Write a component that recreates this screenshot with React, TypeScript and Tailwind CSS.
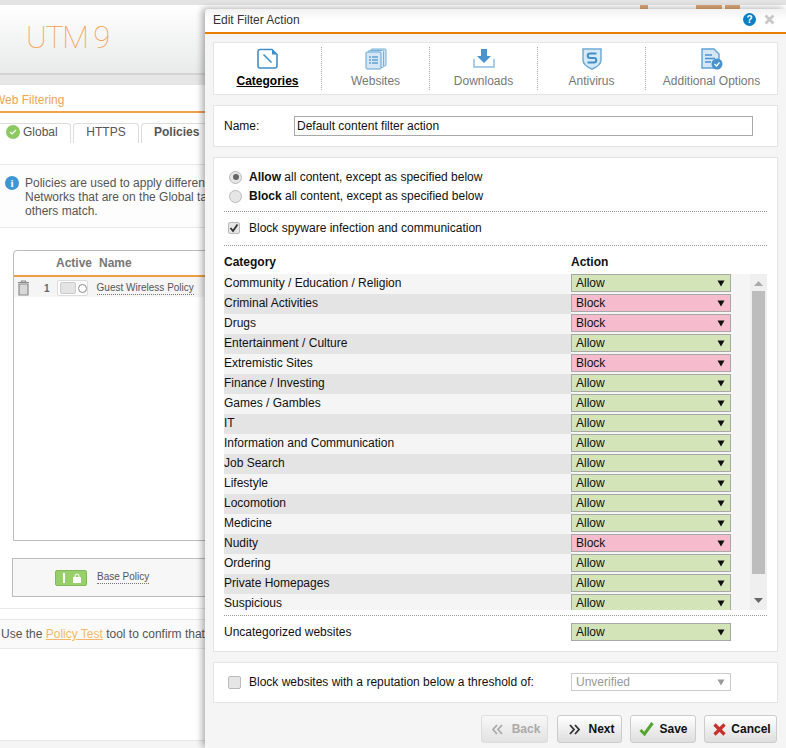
import React from 'react';

const rows: [string, 'Allow' | 'Block'][] = [
  ['Community / Education / Religion', 'Allow'],
  ['Criminal Activities', 'Block'],
  ['Drugs', 'Block'],
  ['Entertainment / Culture', 'Allow'],
  ['Extremistic Sites', 'Block'],
  ['Finance / Investing', 'Allow'],
  ['Games / Gambles', 'Allow'],
  ['IT', 'Allow'],
  ['Information and Communication', 'Allow'],
  ['Job Search', 'Allow'],
  ['Lifestyle', 'Allow'],
  ['Locomotion', 'Allow'],
  ['Medicine', 'Allow'],
  ['Nudity', 'Block'],
  ['Ordering', 'Allow'],
  ['Private Homepages', 'Allow'],
  ['Suspicious', 'Allow'],
];

const Arrow = ({ color = '#111' }: { color?: string }) => (
  <svg width="8" height="7" viewBox="0 0 8 7" className="shrink-0">
    <path d="M0.5 0.5h7L4 6.5z" fill={color} />
  </svg>
);

const ActionSelect = ({ value }: { value: 'Allow' | 'Block' }) => (
  <div
    className={`w-[160px] h-[18px] border border-[#a8a8a8] flex items-center justify-between pl-[4px] pr-[5px] text-[12px] text-[#111] ${
      value === 'Allow' ? 'bg-[#d3e4b9]' : 'bg-[#f6bccd]'
    }`}
  >
    {value}
    <Arrow />
  </div>
);

const Tab = ({ label, active, icon, className }: { label: string; active?: boolean; icon: React.ReactNode; className: string }) => (
  <div className={`flex flex-col items-center my-[4px] ${className}`}>
    <div className="h-[24px] flex items-center justify-center">{icon}</div>
    <span className={`mt-[3px] text-[12px] leading-[14px] ${active ? 'font-bold text-black underline' : 'text-[#777]'}`}>{label}</span>
  </div>
);

const CategoriesIcon = () => (
  <svg width="22" height="22" viewBox="0 0 22 22" fill="none">
    <path d="M3 1.5h12l5 5V18a2 2 0 0 1-2 2H3a2 2 0 0 1-2-2V3.500a2 2 0 0 1 2-2z" stroke="#3f8fc9" strokeWidth="1.6" />
    <path d="M15 1v5.500h5.500z" fill="#3f8fc9" />
    <path d="M6.500 6.500l8 8" stroke="#3f8fc9" strokeWidth="1.6" />
  </svg>
);

const WebsitesIcon = () => (
  <svg width="22" height="22" viewBox="0 0 22 22" fill="none">
    <rect x="6" y="1" width="15" height="17" rx="1" fill="#cfe3f3" stroke="#74aedb" />
    <rect x="3.500" y="2.500" width="15" height="17" rx="1" fill="#e2eff9" stroke="#74aedb" />
    <rect x="1" y="4" width="15" height="17" rx="1" fill="#d5e7f6" stroke="#5ea2d4" />
    <path d="M4 9h2M7 9h6M4 12h2M7 12h6M4 15h2M7 15h6" stroke="#5ea2d4" strokeWidth="1.300" />
  </svg>
);

const DownloadsIcon = () => (
  <svg width="22" height="20" viewBox="0 0 22 20" fill="none">
    <path d="M8 0h6v7h4l-7 7-7-7h4z" fill="#4a94cd" />
    <path d="M1 10v8h20v-8" stroke="#8dbde0" strokeWidth="1.500" />
  </svg>
);

const AntivirusIcon = () => (
  <svg width="20" height="22" viewBox="0 0 20 22" fill="none">
    <path d="M1 1h18v11c0 4-4 7-9 9-5-2-9-5-9-9z" fill="#d8e9f6" stroke="#6fabd9" strokeWidth="1.500" />
    <path d="M14.500 5.500H8a1.800 1.800 0 0 0 0 4.500h4a2 2 0 0 1 0 4.500H5.500" stroke="#3f8fc9" strokeWidth="2" />
  </svg>
);

const OptionsIcon = () => (
  <svg width="22" height="22" viewBox="0 0 22 22" fill="none">
    <path d="M1 1h12l5 5v14H1z" fill="#d5e7f6" stroke="#5ea2d4" strokeWidth="1.400" />
    <path d="M4 7h7M4 10.500h10M4 14h6" stroke="#4a94cd" strokeWidth="1.500" />
    <circle cx="16" cy="16" r="5.500" fill="#4a94cd" />
    <path d="M13.500 16l2 2 3-3.500" stroke="#fff" strokeWidth="1.200" />
  </svg>
);

const Chevrons = ({ color, flip }: { color: string; flip?: boolean }) => (
  <svg width="11" height="11" viewBox="0 0 11 11" fill="none" className={flip ? 'rotate-180' : ''}>
    <path d="M1 1l4 4.500-4 4.500M6 1l4 4.500-4 4.500" stroke={color} strokeWidth="1.800" />
  </svg>
);

const BackgroundPage = () => (
  <div className="w-[786px] h-[748px] flex flex-col bg-white text-[12px] text-[#555]">
    <div className="h-[5px] bg-[#e3e3e3] shrink-0" />
    <div className="relative h-[70px] shrink-0 bg-gradient-to-b from-white to-[#e9eaea] border-b-2 border-[#d4d4d4] pl-[26px] pt-[15px]">
      <span className="text-[31px] leading-[36px] font-thin tracking-[-1.5px] text-[#f2a04e] [font-family:Roboto,sans-serif]">UTM 9</span>
      <span className="absolute left-[640px] top-0 w-[8px] h-[4px] bg-[#dca776]" />
      <span className="absolute left-[696px] top-0 w-[26px] h-[4px] bg-[#dca776]" />
      <span className="absolute left-[725px] top-0 w-[15px] h-[4px] bg-[#dca776]" />
    </div>
    <div className="h-[10px] bg-[#e6e6e6] shrink-0" />
    <div className="h-[28px] shrink-0 border-b-2 border-[#f0a24a] text-[#f0a54f] pt-[8px] leading-[14px] -ml-[6px]">Web Filtering</div>
    <div className="flex gap-[2px] mt-[10px] h-[20px] shrink-0 text-[12px]">
      <div className="w-[71px] border border-b-0 border-[#ddd] border-l-0 rounded-tr-[4px] flex items-center gap-[3px] pl-[6px] pb-[3px]">
        <span className="w-[14px] h-[14px] rounded-full bg-[#8cc864] flex items-center justify-center">
          <svg width="8" height="8" viewBox="0 0 8 8" fill="none"><path d="M1 4l2 2 4-4" stroke="#fff" strokeWidth="1.200" /></svg>
        </span>
        Global
      </div>
      <div className="w-[66px] border border-b-0 border-[#ddd] rounded-t-[4px] flex items-center justify-center pb-[3px]">HTTPS</div>
      <div className="w-[70px] border border-b-0 border-[#ddd] rounded-t-[4px] pl-[12px] pb-[3px] flex items-center font-bold">Policies</div>
    </div>
    <div className="h-[64px] mt-[21px] shrink-0 border-y border-[#e8e8e8] bg-[#fdfdfd] flex gap-[6px] pl-[5px] pt-[11px] leading-[14px]">
      <span className="w-[14px] h-[14px] rounded-full bg-[#3f94d3] text-white text-[11px] font-bold flex items-center justify-center shrink-0 [font-family:'Liberation_Serif',serif]">i</span>
      <div className="whitespace-nowrap">
        Policies are used to apply different<br />Networks that are on the Global tab<br />others match.
      </div>
    </div>
    <div className="h-[291px] w-[300px] mt-[22px] ml-[13px] shrink-0 border border-[#bcbcbc] rounded-tl-[4px]">
      <div className="h-[24px] border-b-2 border-[#ee9f45] flex items-center pl-[42px] gap-[7px] font-bold text-[#777] box-content">
        <span>Active</span>
        <span>Name</span>
      </div>
      <div className="h-[20px] bg-[#f5f5f5] flex items-center pl-[3px] pt-[2px] text-[10px]">
        <svg width="13" height="16" viewBox="0 0 13 16" fill="none">
          <path d="M1 2.500h11M4.500 2.500V1h4v1.500" stroke="#8a8a8a" strokeWidth="1.200" />
          <path d="M2 4h9v11H2z" fill="#d8d8d8" stroke="#8a8a8a" strokeWidth="1.200" />
        </svg>
        <span className="ml-[14px] font-bold text-[#666]">1</span>
        <div className="ml-[7px] w-[31px] h-[16px] border border-[#ddd] rounded-[2px] flex items-center pl-[2px] gap-[2px] bg-white">
          <span className="w-[16px] h-[12px] rounded-[2px] bg-[#e4e4e4] border border-[#ccc]" />
          <span className="w-[9px] h-[9px] rounded-full border-[1.5px] border-[#888]" />
        </div>
        <span className="ml-[9px] border-b border-dotted border-[#777] whitespace-nowrap leading-[12px]">Guest Wireless Policy</span>
      </div>
    </div>
    <div className="h-[39px] w-[300px] mt-[17px] ml-[12px] shrink-0 border border-[#bcbcbc] bg-[#f7f7f7] flex items-center pl-[42px] text-[10px]">
      <div className="w-[32px] h-[16px] bg-[#97d069] border border-[#85b85c] rounded-[2px] flex items-center pl-[7px] gap-[8px]">
        <span className="w-[2px] h-[10px] bg-white" />
        <svg width="8" height="10" viewBox="0 0 8 10"><path d="M0.500 4.500h7V10h-7zM2 4.500V3a2 2 0 0 1 4 0v1.500" fill="none" stroke="#fff" /><rect x="0.500" y="4.500" width="7" height="5.500" fill="#fff" /></svg>
      </div>
      <span className="ml-[10px] border-b border-dotted border-[#777] leading-[12px] whitespace-nowrap">Base Policy</span>
    </div>
    <div className="h-px mt-[11px] bg-[#e8e8e8] shrink-0" />
    <div className="h-[30px] mt-[10px] shrink-0 border-y border-[#e8e8e8] bg-[#fafafa] flex items-center pl-px whitespace-nowrap">
      Use the&nbsp;<span className="text-[#f8b866] underline">Policy Test</span>&nbsp;tool to confirm that
    </div>
    <div className="flex-1" />
    <div className="h-[8px] shrink-0 border-t border-[#e6e6e6] bg-[#f5f5f5] text-[12px] leading-[14px] pl-[8px] pt-[5px] overflow-hidden whitespace-nowrap">Unlimited Allotted Internet</div>
  </div>
);

const EditFilterAction = () => (
  <div className="absolute left-[205px] top-[9px] w-[581px] h-[739px] bg-[#f5f5f5] rounded-tl-[4px] shadow-[-3px_-1px_6px_rgba(0,0,0,0.3)] flex flex-col text-[12px] text-[#111] [font-family:'Liberation_Sans',Arial,sans-serif]">
    <div className="h-[25px] shrink-0 rounded-tl-[4px] border-b-2 border-[#e87e04] bg-gradient-to-b from-[#f2f2f2] via-white to-white flex items-center justify-between pl-[8px] pr-[11px] pb-[2px]">
      <span className="text-[#333]">Edit Filter Action</span>
      <div className="flex items-center gap-[8px]">
        <span className="w-[13px] h-[13px] rounded-full bg-[#0a7fc6] text-white text-[10px] font-bold flex items-center justify-center">?</span>
        <svg width="11" height="11" viewBox="0 0 11 11"><path d="M1.500 1.500l8 8M9.500 1.500l-8 8" stroke="#c8c8c8" strokeWidth="2.600" /></svg>
      </div>
    </div>

    <div className="h-[53px] mt-[8px] mx-[8px] shrink-0 bg-white border border-[#e4e4e4] flex">
      <Tab label="Categories" active icon={<CategoriesIcon />} className="w-[108px] border-r border-dotted border-[#aaa]" />
      <Tab label="Websites" icon={<WebsitesIcon />} className="w-[108px] border-r border-dotted border-[#aaa]" />
      <Tab label="Downloads" icon={<DownloadsIcon />} className="w-[108px] border-r border-dotted border-[#aaa]" />
      <Tab label="Antivirus" icon={<AntivirusIcon />} className="w-[108px] border-r border-dotted border-[#aaa]" />
      <Tab label="Additional Options" icon={<OptionsIcon />} className="flex-1" />
    </div>

    <div className="h-[42px] mt-[10px] mx-[8px] shrink-0 bg-white border border-[#e4e4e4] flex items-center pl-[10px]">
      <span className="w-[70px]">Name:</span>
      <div className="w-[459px] h-[20px] border border-[#a8a8a8] pl-[2px] flex items-center text-[12px]">Default content filter action</div>
    </div>

    <div className="h-[495px] mt-[10px] mx-[8px] shrink-0 bg-white border border-[#e4e4e4] pl-[10px] pr-[10px] flex flex-col">
      <div className="pt-[12px] pl-[5px] h-[54px] shrink-0 border-b border-dotted border-[#999] flex flex-col gap-[5px]">
        <label className="flex items-center gap-[7px] h-[14px]">
          <span className="w-[13px] h-[13px] rounded-full border border-[#bbb] bg-[#e6e6e6] flex items-center justify-center">
            <span className="w-[6px] h-[6px] rounded-full bg-[#666]" />
          </span>
          <span><b>Allow</b> all content, except as specified below</span>
        </label>
        <label className="flex items-center gap-[7px] h-[14px]">
          <span className="w-[13px] h-[13px] rounded-full border border-[#bbb] bg-[#e6e6e6]" />
          <span><b>Block</b> all content, except as specified below</span>
        </label>
      </div>
      <div className="h-[34px] pl-[4px] pb-[2px] shrink-0 border-b border-dotted border-[#999] flex items-center gap-[9px]">
        <span className="w-[12px] h-[12px] rounded-[2px] border border-[#bbb] bg-[#e6e6e6] flex items-center justify-center">
          <svg width="10" height="10" viewBox="0 0 10 10" fill="none"><path d="M1.500 5l2.500 3 4.500-6.500" stroke="#333" strokeWidth="1.800" /></svg>
        </span>
        Block spyware infection and communication
      </div>
      <div className="h-[28px] shrink-0 flex items-center font-bold pt-[4px]">
        <span className="w-[347px]">Category</span>
        <span>Action</span>
      </div>
      <div className="h-[336px] shrink-0 overflow-hidden flex">
        <div className="w-[526px] shrink-0">
          {rows.map(([name, action], i) => (
            <div key={name} className="h-[20px] flex items-start bg-[#f5f5f5]">
              <span className={`w-[347px] h-[20px] pb-[2px] flex items-center ${i % 2 ? 'bg-[#e4e4e4]' : ''}`}>{name}</span>
              <ActionSelect value={action} />
            </div>
          ))}
        </div>
        <div className="w-[17px] shrink-0 bg-[#efefef] flex flex-col items-center">
          <svg width="9" height="5" viewBox="0 0 9 5" className="mt-[7px]"><path d="M4.500 0L9 5H0z" fill="#a9a9a9" /></svg>
          <div className="w-[13px] h-[283px] mt-[5px] bg-[#bdbdbd]" />
          <svg width="9" height="5" viewBox="0 0 9 5" className="mt-[24px]"><path d="M0 0h9L4.500 5z" fill="#666" /></svg>
        </div>
      </div>
      <div className="h-[33px] mt-[5px] shrink-0 border-t border-dotted border-[#999] flex items-center">
        <span className="w-[347px]">Uncategorized websites</span>
        <ActionSelect value="Allow" />
      </div>
    </div>

    <div className="h-[41px] mt-[10px] mx-[8px] shrink-0 bg-white border border-[#e4e4e4] flex items-center pl-[14px] pb-[1px]">
      <span className="w-[13px] h-[13px] rounded-[2px] border border-[#bbb] bg-[#e6e6e6]" />
      <span className="ml-[8px] w-[322px]">Block websites with a reputation below a threshold of:</span>
      <div className="w-[160px] h-[18px] border border-[#ccc] flex items-center justify-between pl-[4px] pr-[5px] text-[#999]">
        Unverified
        <Arrow color="#999" />
      </div>
    </div>

    <div className="mt-[12px] mr-[9px] flex justify-end font-bold text-[12px]">
      <button className="w-[67px] h-[28px] rounded-[3px] border border-[#ddd] bg-gradient-to-b from-[#f8f8f8] to-[#e2e2e2] text-[#aaa] flex items-center justify-center gap-[9px] pl-[3px]">
        <Chevrons color="#aaa" flip />
        Back
      </button>
      <button className="ml-[9px] w-[65px] h-[28px] rounded-[3px] border border-[#ccc] bg-gradient-to-b from-white to-[#dedede] text-[#111] flex items-center justify-center gap-[8px] pl-[5px]">
        <Chevrons color="#333" />
        Next
      </button>
      <button className="ml-[8px] w-[66px] h-[28px] rounded-[3px] border border-[#ccc] bg-gradient-to-b from-white to-[#dedede] text-[#111] flex items-center justify-center gap-[5px] pl-[1px]">
        <svg width="15" height="14" viewBox="0 0 15 14" fill="none"><path d="M1.500 8l4 4 8-11" stroke="#55a630" strokeWidth="3" /></svg>
        Save
      </button>
      <button className="ml-[8px] w-[73px] h-[28px] rounded-[3px] border border-[#ccc] bg-gradient-to-b from-white to-[#dedede] text-[#111] flex items-center justify-center gap-[5px] pl-[3px]">
        <svg width="13" height="13" viewBox="0 0 13 13" fill="none"><path d="M1.500 1.500l10 10M11.500 1.500l-10 10" stroke="#c9302c" strokeWidth="3.200" /></svg>
        Cancel
      </button>
    </div>
  </div>
);

export default function App() {
  return (
    <div className="relative w-[786px] h-[748px] overflow-hidden [font-family:'Liberation_Sans',Arial,sans-serif]">
      <BackgroundPage />
      <EditFilterAction />
    </div>
  );
}
